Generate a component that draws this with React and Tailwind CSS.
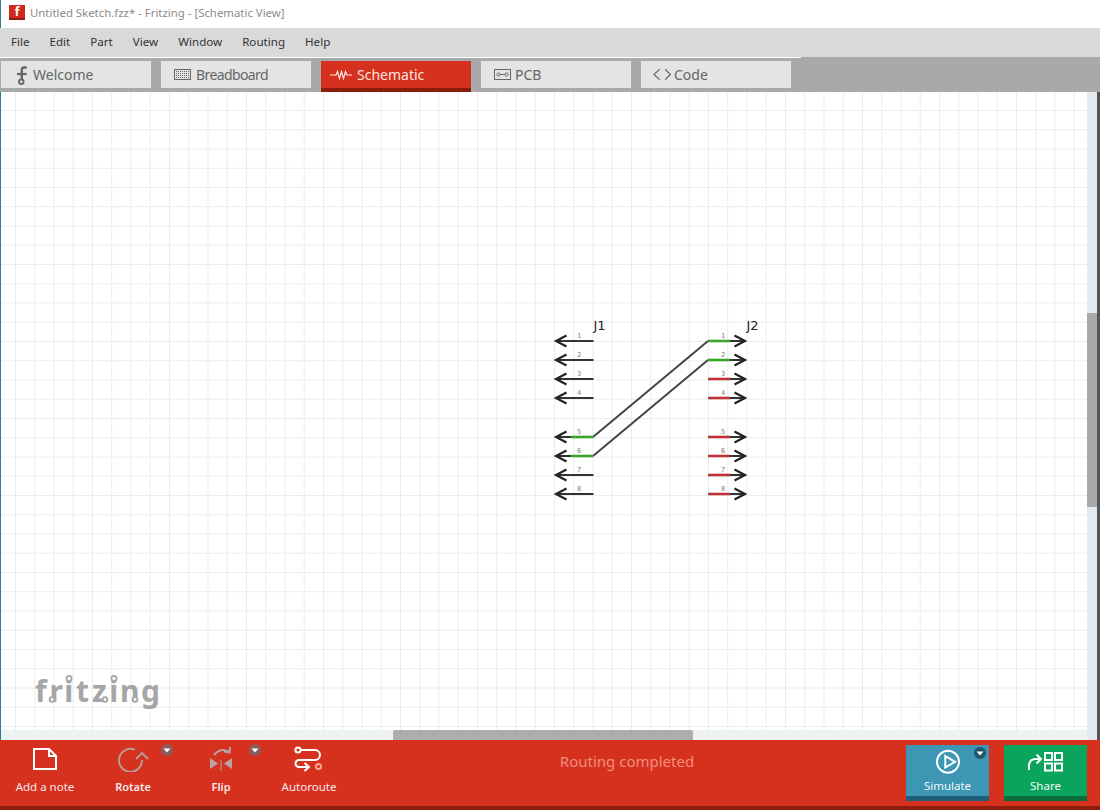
const menuItems = ["File", "Edit", "Part", "View", "Window", "Routing", "Help"]
const pinRows = [
    { n: 1, y: 341, j1: "#333333", j2: "#3aa52b" },
    { n: 2, y: 360, j1: "#333333", j2: "#3aa52b" },
    { n: 3, y: 379, j1: "#333333", j2: "#bf3238" },
    { n: 4, y: 398, j1: "#333333", j2: "#bf3238" },
    { n: 5, y: 437, j1: "#3aa52b", j2: "#bf3238" },
    { n: 6, y: 456, j1: "#3aa52b", j2: "#bf3238" },
    { n: 7, y: 475, j1: "#333333", j2: "#bf3238" },
    { n: 8, y: 494, j1: "#333333", j2: "#bf3238" },
]

function DropBadge({ className, dark }) {
    return (
        <svg width="12" height="12" viewBox="0 0 12 12" className={`absolute ${className}`}>
            <circle cx="6" cy="6" r="6" fill={dark ? "#1f566e" : "#8a5c5c"} />
            <path d="M2.5 4.5 H9.5 L6 8.5 Z" fill="#ffffff" />
        </svg>
    )
}

function Tab({ label, active, className, gap, labelClass = "", children }) {
    return (
        <div
            className={`w-[150px] flex items-center ${className} ${gap} ${
                active ? "h-[31px] bg-[#d6301f] border-b-4 border-[#8a1c0a] text-[#fbe4df]" : "h-[27px] bg-[#e4e4e4] text-[#666666]"
            }`}
        >
            {children}
            <span className={`text-[14px] leading-none ${labelClass}`}>{label}</span>
        </div>
    )
}

function ToolItem({ label, bold, children }) {
    return (
        <div className="relative w-[88px] flex flex-col items-center pt-[6px]">
            <div className="h-[26px]">{children}</div>
            <span className={`mt-[7px] leading-4 text-[#fbeae6] ${bold ? "text-[11px] font-semibold" : "text-[11.5px]"}`}>{label}</span>
        </div>
    )
}

export default function App() {
    return (
        <div className="w-[1100px] h-[810px] flex flex-col overflow-hidden bg-white font-['Noto_Sans',sans-serif]">
            {/* Title bar */}
            <div className="h-[28px] flex items-center gap-[5px] pl-[8px] pb-[3px] bg-white border-l border-[#2a7a9c]">
                <div className="w-[16px] h-[15px] flex items-center justify-center bg-[#cf2a1c] border-b-2 border-[#8a1c0a] text-white text-[12px] leading-none font-bold">f</div>
                <span className="text-[11.4px] text-[#8c8c8c]">Untitled Sketch.fzz* - Fritzing - [Schematic View]</span>
            </div>

            {/* Menu */}
            <div className="h-[29px] flex items-center gap-5 px-[11px] pb-[2px] bg-[#d9d9d9] text-[11.6px] text-[#333333]">
                {menuItems.map((item) => (
                    <span key={item}>{item}</span>
                ))}
            </div>

            {/* View tabs */}
            <div className="h-[35px] bg-[#a9a9a9]">
                <div className="h-px w-[801px] bg-white"></div>
                <div className="flex items-start gap-[10px] pl-px mt-[3px]">
                    <Tab label="Welcome" className="pl-4" gap="gap-[6px]">
                        <svg width="10" height="20" viewBox="17 64 10 20" fill="none" stroke="#666666">
                            <path d="M26.8 66.5 H24 Q21.8 66.5 21.8 69 V78" strokeWidth="2.4" />
                            <path d="M17 73 H26.7" strokeWidth="2.2" />
                            <circle cx="21.3" cy="80.8" r="2.3" strokeWidth="1.8" />
                        </svg>
                    </Tab>
                    <Tab label="Breadboard" labelClass="tracking-[-0.6px]" className="pl-[13px]" gap="gap-[5px]">
                        <svg width="17" height="11" viewBox="174 70 17 11" fill="none" stroke="#666666">
                            <rect x="174.5" y="70.5" width="16" height="10" strokeWidth="1" />
                            <path d="M176 72.5 H189 M176 74.5 H189 M176 76.5 H189 M176 78.5 H189" strokeWidth="1" strokeDasharray="1 1" />
                        </svg>
                    </Tab>
                    <Tab label="Schematic" active className="pl-[9px]" gap="gap-[5px]">
                        <svg width="22" height="10" viewBox="330 70 22 10" fill="none" stroke="#fbe4df" strokeWidth="1.2">
                            <path d="M330 75 H336 L337.5 71.5 L339.5 78.5 L341.5 71.5 L343.5 78.5 L345.5 71.5 L347 75 H352" />
                        </svg>
                    </Tab>
                    <Tab label="PCB" className="pl-[13px]" gap="gap-[4px]">
                        <svg width="17" height="11" viewBox="494 70 17 11" fill="none" stroke="#666666" strokeWidth="1">
                            <rect x="494.5" y="70.5" width="16" height="10" />
                            <circle cx="498.5" cy="75.5" r="1.6" />
                            <circle cx="506.5" cy="75.5" r="1.6" />
                            <path d="M500 75.5 H505" />
                        </svg>
                    </Tab>
                    <Tab label="Code" className="pl-[12px]" gap="gap-[3px]">
                        <svg width="18" height="11" viewBox="653 70 18 11" fill="none" stroke="#666666" strokeWidth="1.2">
                            <path d="M659.8 70.3 L653.8 75.5 L659.8 80.7 M665.2 70.3 L670.4 75.5 L665.2 80.7" />
                        </svg>
                    </Tab>
                </div>
            </div>

            {/* Canvas and scrollbars */}
            <div className="h-[648px] flex">
                <div className="w-[1087px] flex flex-col border-l border-[#2a7a9c]">
                    <div className="relative h-[638px] bg-white bg-[linear-gradient(to_right,#e9ecf1_1px,transparent_1px),linear-gradient(to_bottom,#e9ecf1_1px,transparent_1px)] bg-[size:19.25px_19.25px] bg-[position:14px_18px]">
                        <svg width="1086" height="638" viewBox="1 92 1086 638" className="absolute left-0 top-0">
                            {/* Logo */}
                            <text x="35 49.5 64.3 76 92 109.3 120 141" y="702" fontFamily="'Noto Sans', sans-serif" fontWeight="700" fontSize="30" fill="#a6a6a6">fritzing</text>
                            <g fill="#ffffff" stroke="#a6a6a6" strokeWidth="1.8">
                                <circle cx="69" cy="678.5" r="2.6" />
                                <circle cx="114" cy="678.5" r="2.6" />
                                <circle cx="52" cy="699.5" r="2.4" />
                                <circle cx="105" cy="699.5" r="2.4" />
                                <circle cx="135" cy="699.5" r="2.4" />
                            </g>

                            {/* Schematic */}
                            <g fontFamily="'DejaVu Sans', sans-serif" fontSize="13" fill="#222222">
                                <text x="593.5" y="329.5">J1</text>
                                <text x="746.5" y="329.5">J2</text>
                            </g>
                            <g stroke="#444444" strokeWidth="2" fill="none">
                                <path d="M593 437 L708 341" />
                                <path d="M593 456 L708 360" />
                            </g>
                            {pinRows.map((pin) => (
                                <g key={pin.n} fill="none">
                                    <path d={`M556 ${pin.y} H571`} stroke="#333333" strokeWidth="2" />
                                    <path d={`M571 ${pin.y} H593.5`} stroke={pin.j1} strokeWidth={pin.n === 5 || pin.n === 6 ? 2.6 : 2} />
                                    <path d={`M566.5 ${pin.y - 5.5} L556 ${pin.y} L566.5 ${pin.y + 5.5}`} stroke="#222222" strokeWidth="2.2" />
                                    <path d={`M708 ${pin.y} H730`} stroke={pin.j2} strokeWidth="2.6" />
                                    <path d={`M730 ${pin.y} H745`} stroke="#333333" strokeWidth="2" />
                                    <path d={`M734.5 ${pin.y - 5.5} L745 ${pin.y} L734.5 ${pin.y + 5.5}`} stroke="#222222" strokeWidth="2.2" />
                                    <text x="579" y={pin.y - 3.5} textAnchor="middle" fontFamily="'DejaVu Sans Mono', monospace" fontSize="7" fill="#808080">{pin.n}</text>
                                    <text x="723" y={pin.y - 3.5} textAnchor="middle" fontFamily="'DejaVu Sans Mono', monospace" fontSize="7" fill="#808080">{pin.n}</text>
                                </g>
                            ))}
                        </svg>
                    </div>
                    <div className="h-[10px] pl-[392px] bg-[#eef1f2]">
                        <div className="w-[300px] h-full bg-[#adadad] rounded-t-[2px]"></div>
                    </div>
                </div>
                <div className="w-[10px] pt-[221px] bg-[#e3ebf0]">
                    <div className="h-[194px] bg-[#a9a9a9]"></div>
                </div>
                <div className="w-[3px] bg-[#555555]"></div>
            </div>

            {/* Bottom toolbar */}
            <div className="h-[66px] flex pl-px pr-[13px] bg-[#d6301f]">
                <ToolItem label="Add a note">
                    <svg width="32" height="26" viewBox="29 746 32 26" fill="none" stroke="#ffffff" strokeWidth="2">
                        <path d="M34 749 H49 L56 756 V769 H34 Z" />
                        <path d="M49 749 V756 H56" />
                    </svg>
                </ToolItem>
                <ToolItem label="Rotate" bold>
                    <svg width="32" height="26" viewBox="117 746 32 26" fill="none" stroke="#b89a94" strokeWidth="2">
                        <path d="M135 749.8 A11.5 11.5 0 1 0 142 760" />
                        <path d="M136 759 L142 753 L148 759" />
                    </svg>
                    <DropBadge className="left-[72px] top-[4px]" />
                </ToolItem>
                <ToolItem label="Flip" bold>
                    <svg width="32" height="26" viewBox="205 746 32 26" fill="none" stroke="#b8a3a0" strokeWidth="2">
                        <path d="M210 758 V769 L218 763.5 Z M232 758 V769 L224 763.5 Z" fill="#b8a3a0" stroke="none" />
                        <path d="M221 760 V771" strokeWidth="1" />
                        <path d="M214 755 Q221 747 229 752" />
                        <path d="M224 751.5 L229.5 752.5 L230 747" />
                    </svg>
                    <DropBadge className="left-[72px] top-[4px]" />
                </ToolItem>
                <ToolItem label="Autoroute">
                    <svg width="32" height="26" viewBox="293 746 32 26" fill="none" stroke="#ffffff" strokeWidth="2">
                        <circle cx="298" cy="750" r="2.6" />
                        <path d="M301 750 H315 A5 5 0 0 1 315 760 H299 A3.5 3.5 0 0 0 299 767 H308" />
                        <path d="M304.5 763 L309 767 L304.5 771" />
                        <circle cx="318.5" cy="766.5" r="2.6" stroke="#f8a898" />
                    </svg>
                </ToolItem>

                <div className="w-[548px] pt-[10px] text-center text-[15px] leading-[22px] text-[#f28f7d]">Routing completed</div>

                <div className="ml-auto flex items-start gap-[15px] pt-[5px]">
                    <div className="relative w-[83px] h-[56px] flex flex-col items-center pt-[4px] bg-[#3c96b4] border-b-[5px] border-[#1f5f78]">
                        <svg width="32" height="26" viewBox="931 749 32 26" fill="none" stroke="#ffffff" strokeWidth="2">
                            <circle cx="947" cy="761.8" r="11" />
                            <path d="M944.3 756 V767.6 L954 761.8 Z" />
                        </svg>
                        <span className="mt-[3px] text-[11.5px] leading-4 text-[#f2f8fa]">Simulate</span>
                        <DropBadge dark className="left-[68px] top-[2px]" />
                    </div>
                    <div className="w-[83px] h-[56px] flex flex-col items-center pt-[4px] bg-[#0aa45c] border-b-[5px] border-[#076d3a]">
                        <svg width="39" height="26" viewBox="1026 749 39 26" fill="none" stroke="#ffffff" strokeWidth="2">
                            <path d="M1029 770 V766 Q1029 759 1036 759 H1040" />
                            <path d="M1036.5 754.5 L1041 759 L1036.5 763.5" />
                            <rect x="1045" y="753" width="7" height="7" />
                            <rect x="1055" y="753" width="7" height="7" />
                            <rect x="1045" y="763.5" width="7" height="7" />
                            <rect x="1055" y="763.5" width="7" height="7" />
                        </svg>
                        <span className="mt-[3px] text-[11.5px] leading-4 text-[#f2faf6]">Share</span>
                    </div>
                </div>
            </div>

            <div className="h-[4px] bg-[#8a1c0a]"></div>
        </div>
    )
}
